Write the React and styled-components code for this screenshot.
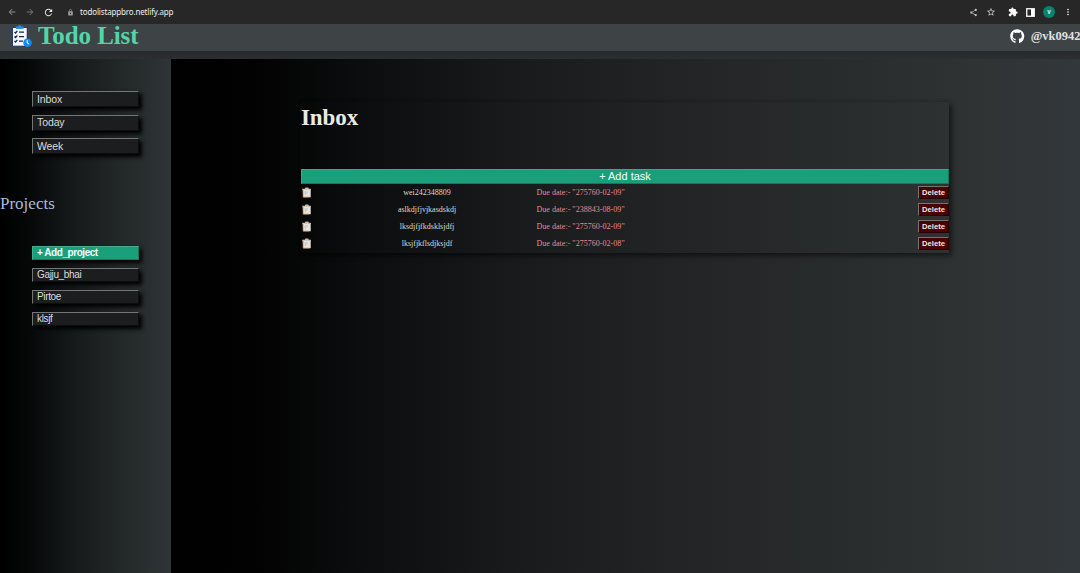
import React from "react";
import styled, { createGlobalStyle } from "styled-components";
import { FaGithub } from "react-icons/fa";
import { MdArrowBack, MdArrowForward, MdRefresh, MdLock, MdShare, MdStarBorder, MdExtension, MdMoreVert } from "react-icons/md";

const GlobalStyle = createGlobalStyle`
  * { box-sizing: border-box; }
  body { margin: 0; background: #000; overflow: hidden; font-family: "Liberation Serif", "Times New Roman", serif; }
`;

const Page = styled.div`
  display: flex;
  flex-direction: column;
  width: 100%;
  height: 100vh;
  overflow: hidden;
`;

const BrowserBar = styled.div`
  display: flex;
  align-items: center;
  justify-content: space-between;
  flex: none;
  height: 24px;
  padding: 0 7px;
  background: #272727;
  color: #e4e6e8;
`;

const BarGroup = styled.div`
  display: flex;
  align-items: center;
  gap: ${(p) => p.$gap}px;
`;

const BarIcon = styled.span`
  display: flex;
  font-size: ${(p) => p.$size || 10}px;
  color: ${(p) => p.$color || "#e4e6e8"};
  margin-left: ${(p) => p.$before || 0}px;
`;

const Url = styled.span`
  margin-left: -2px;
  font: 8px/24px "Noto Sans", "Open Sans", sans-serif;
  letter-spacing: -0.15px;
  color: #eceef0;
`;

const Avatar = styled.span`
  display: grid;
  place-items: center;
  width: 12px;
  height: 12px;
  border-radius: 50%;
  background: #07836f;
  color: #e6f8f4;
  font: 500 7px/12px Roboto, sans-serif;
`;

const Header = styled.header`
  display: flex;
  align-items: flex-start;
  justify-content: space-between;
  flex: none;
  height: 27px;
  background: #3e4346;
`;

const HeaderShade = styled.div`
  flex: none;
  height: 8px;
  background: linear-gradient(#25292a, #2b2f31);
`;

const Brand = styled.div`
  display: flex;
  align-items: center;
  gap: 6px;
  padding-left: 11px;
  height: 24px;
`;

const Title = styled.h1`
  margin: 0;
  font-size: 25px;
  line-height: 24px;
  letter-spacing: -0.08px;
  color: #54d4a9;
`;

const Account = styled.div`
  display: flex;
  align-items: center;
  gap: 6px;
  height: 24px;
  color: #fff;
  font-size: 14.5px;
`;

const Handle = styled.span`
  font-size: 12.5px;
  font-weight: bold;
  line-height: 24px;
  color: #e0e0e0;
  margin-right: -0.5px;
`;

const Body = styled.div`
  display: flex;
  flex: 1;
  min-height: 0;
`;

const Sidebar = styled.aside`
  flex: none;
  width: 170.5px;
  padding-top: 32px;
  background: linear-gradient(90deg, #000 0%, #020303 10%, #141819 40%, #222728 70%, #2f3536 100%);
`;

const NavList = styled.nav`
  display: flex;
  flex-direction: column;
  gap: ${(p) => p.$gap}px;
  padding-left: 32px;
`;

const NavButton = styled.button`
  display: flex;
  align-items: center;
  width: 106.5px;
  height: ${(p) => p.$height}px;
  padding: 0 0 ${(p) => p.$lift || 1}px 4px;
  border: 1px solid;
  border-color: ${(p) => (p.$accent ? "#48a98d #137a5e #137a5e #48a98d" : "#747676 #0c0e0e #0c0e0e #747676")};
  background: ${(p) => (p.$accent ? "#1b9e7a" : "#1b1d1e")};
  color: ${(p) => (p.$accent ? "#f4fffb" : "#dcdcdc")};
  font: ${(p) => (p.$accent ? "bold" : "normal")} ${(p) => p.$font}px/12px "Liberation Sans", Arial, sans-serif;
  letter-spacing: ${(p) => p.$track || 0}px;
  box-shadow: 3px 3px 4px #000;
`;

const SectionTitle = styled.h2`
  margin: 40px 0 32px;
  font-size: 17px;
  line-height: 20px;
  font-weight: normal;
  color: #a5bbdf;
`;

const Main = styled.main`
  flex: 1;
  padding: 43px 131px 0 130.5px;
  background: linear-gradient(90deg, #000 0%, #020202 9%, #0c0d0e 21%, #191b1c 39%, #232526 58%, #2a2d2e 76%, #2f3334 89%, #32373b 100%);
`;

const TaskCard = styled.section`
  height: 151px;
  box-shadow: 3px 3px 5px rgba(0, 0, 0, 0.5), 0 -1px 3px rgba(0, 0, 0, 0.15);
`;

const CardTitle = styled.h2`
  margin: 0;
  height: 67px;
  padding-top: 3px;
  font-size: 23px;
  line-height: 26px;
  letter-spacing: -0.1px;
  color: #ece8e3;
`;

const AddTask = styled.button`
  display: block;
  width: 100%;
  height: 15px;
  padding: 0;
  border: 1px solid;
  border-color: #3ca88b #14785e #14785e #3ca88b;
  background: #1b9e7a;
  color: #f2fffb;
  font: 11px/13px "Liberation Sans", Arial, sans-serif;
`;

const TaskRow = styled.div`
  display: grid;
  grid-template-columns: 11px 230px 1fr 31px;
  align-items: center;
  height: 17px;
  font-size: 8px;
`;

const TaskName = styled.span`
  text-align: center;
  color: #d9d9d9;
`;

const DueDate = styled.span`
  margin-left: -5.5px;
  letter-spacing: 0.03px;
  color: #e98a8e;
`;

const DeleteButton = styled.button`
  height: 13px;
  padding: 0;
  border: 1px solid;
  border-color: #777171 #240000 #240000 #777171;
  background: #480000;
  color: #f1e5e5;
  font: bold 7.6px/10px "Liberation Sans", Arial, sans-serif;
`;

function ClipboardLogo() {
  return (
    <svg width="21" height="23" viewBox="0 0 21 23">
      <rect x="1" y="2" width="15.5" height="19.5" rx="1.5" fill="#233b70" />
      <rect x="2" y="3" width="13.7" height="17.7" fill="#f5f8ff" />
      <path d="M5 3V1.5h2.2a1.7 1.7 0 0 1 3.2 0h2.2V4H5z" fill="#2193ed" />
      <path d="m3.5 7 1 1 1.8-2M3.5 11.5l1 1 1.8-2M3.5 16l1 1 1.8-2M8 7.2h5M8 11.7h5M8 16.2h4" fill="none" stroke="#18284e" strokeWidth="1.3" />
      <circle cx="16.5" cy="17.7" r="4.3" fill="#1688e8" />
      <path d="M16.2 15v3l2 1" fill="none" stroke="#fff" />
    </svg>
  );
}

function TrashIcon() {
  return (
    <svg width="11" height="11" viewBox="0 0 11 11">
      <path d="M1.7 2h8v8.3H2.2z" fill="#e9e6e0" />
      <path d="M1.2 2.7V1.7h2.6L4.5.6h2.7l.7 1.1h1.9v1z" fill="#cbbcaa" />
      <path d="M2.2 3v7h6" fill="none" stroke="#dd9c67" strokeWidth=".8" />
      <path d="m4 4.2.4 4M6 3.8v3" fill="none" stroke="#b9b5ae" strokeWidth=".8" />
    </svg>
  );
}

function SidePanelIcon() {
  return (
    <svg width="9" height="9" viewBox="0 0 9 9">
      <rect x=".75" y=".75" width="7.5" height="7.5" fill="none" stroke="#fff" strokeWidth="1.3" />
      <path d="M5 1h3v7H5z" fill="#fff" />
    </svg>
  );
}

const views = ["Inbox", "Today", "Week"];
const projects = ["Gajju_bhai", "Pirtoe", "klsjf"];
const tasks = [
  ["wei242348809", "275760-02-09"],
  ["aslkdjfjvjkasdskdj", "238843-08-09"],
  ["lksdjfjfkdsklsjdfj", "275760-02-09"],
  ["lksjfjkflsdjksjdf", "275760-02-08"],
];

export default function App() {
  return (
    <Page>
      <GlobalStyle />
      <BrowserBar>
        <BarGroup $gap={8}>
          <BarIcon $color="#8b8d8f"><MdArrowBack /></BarIcon>
          <BarIcon $color="#737577"><MdArrowForward /></BarIcon>
          <BarIcon $size={11}><MdRefresh /></BarIcon>
          <BarIcon $size={7} $color="#97999b" $before={5}><MdLock /></BarIcon>
          <Url>todolistappbro.netlify.app</Url>
        </BarGroup>
        <BarGroup $gap={8}>
          <BarIcon $size={9} $color="#bdc0c2"><MdShare /></BarIcon>
          <BarIcon $color="#c9cbcd"><MdStarBorder /></BarIcon>
          <BarIcon $before={4} $color="#fff"><MdExtension /></BarIcon>
          <SidePanelIcon />
          <Avatar>v</Avatar>
          <BarIcon $color="#fff"><MdMoreVert /></BarIcon>
        </BarGroup>
      </BrowserBar>
      <Header>
        <Brand>
          <ClipboardLogo />
          <Title>Todo List</Title>
        </Brand>
        <Account>
          <FaGithub />
          <Handle>@vk0942</Handle>
        </Account>
      </Header>
      <HeaderShade />
      <Body>
        <Sidebar>
          <NavList $gap={7.5}>
            {views.map((name) => (
              <NavButton key={name} $height={16} $font={10.5} $track={-0.1}>{name}</NavButton>
            ))}
          </NavList>
          <SectionTitle>Projects</SectionTitle>
          <NavList $gap={8}>
            <NavButton $accent $height={14} $font={10} $track={-0.45}>+ Add_project</NavButton>
            {projects.map((name) => (
              <NavButton key={name} $height={14} $font={10} $track={-0.35}>{name}</NavButton>
            ))}
          </NavList>
        </Sidebar>
        <Main>
          <TaskCard>
            <CardTitle>Inbox</CardTitle>
            <AddTask>+ Add task</AddTask>
            {tasks.map(([name, due]) => (
              <TaskRow key={name}>
                <TrashIcon />
                <TaskName>{name}</TaskName>
                <DueDate>Due date:- "{due}"</DueDate>
                <DeleteButton>Delete</DeleteButton>
              </TaskRow>
            ))}
          </TaskCard>
        </Main>
      </Body>
    </Page>
  );
}
